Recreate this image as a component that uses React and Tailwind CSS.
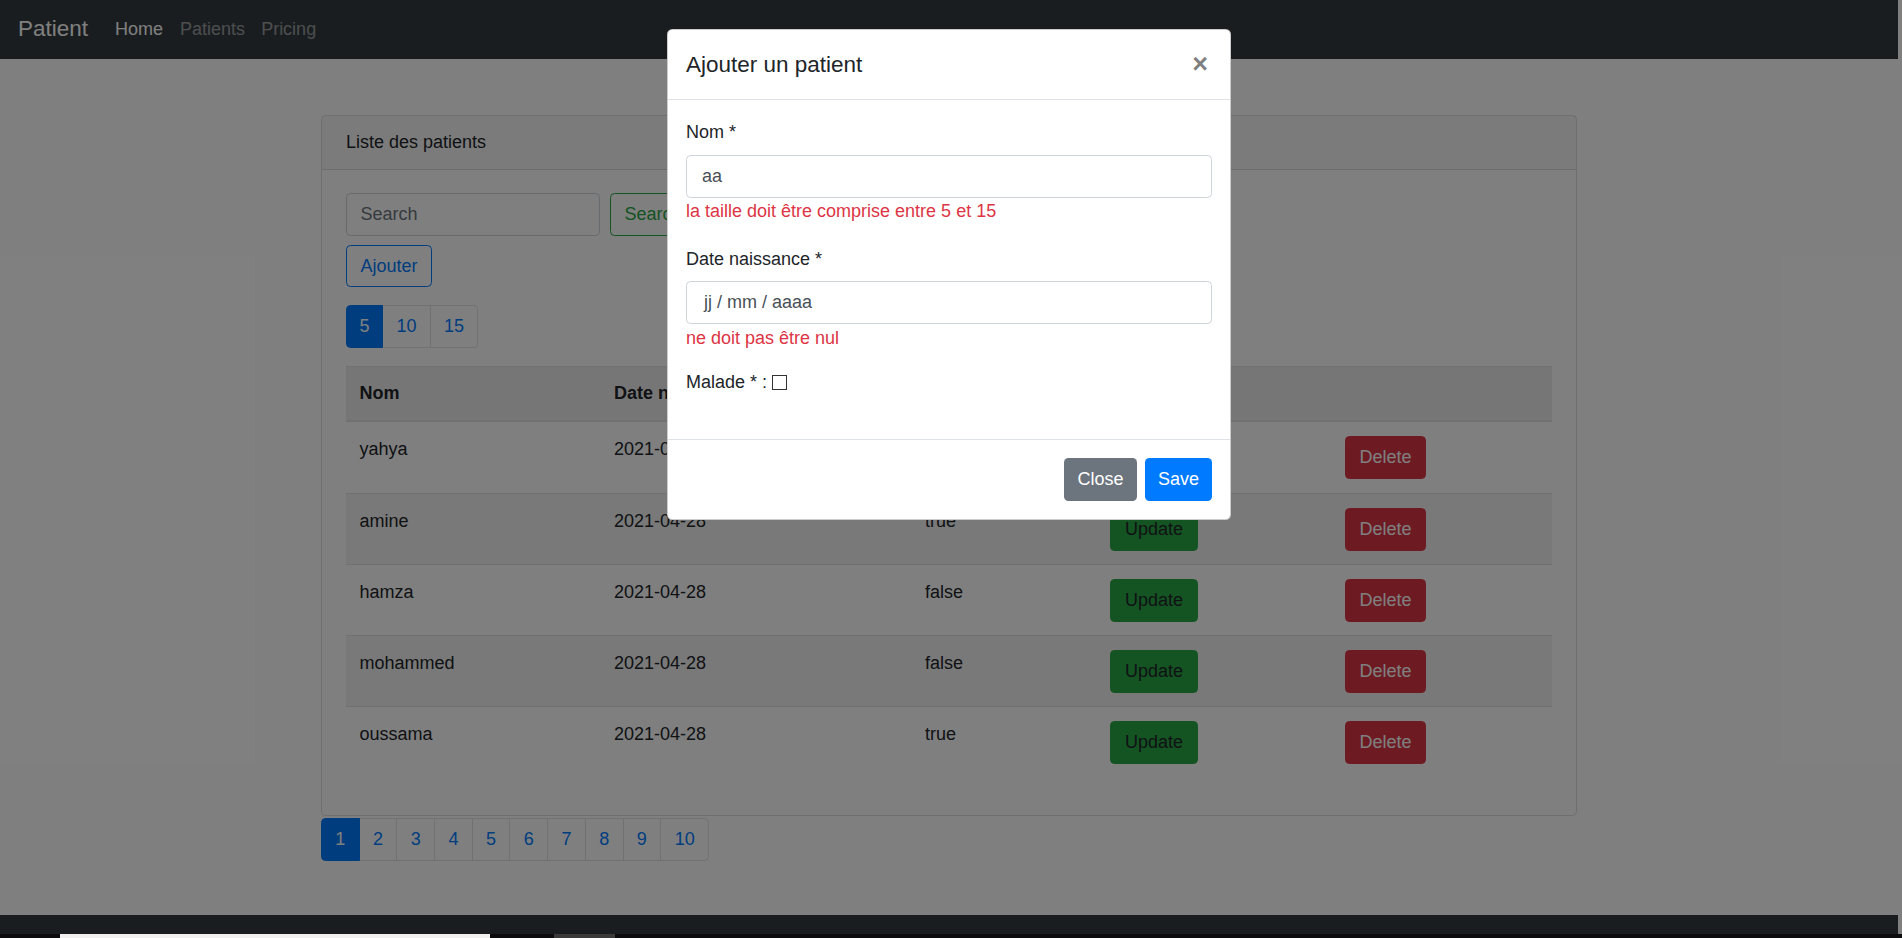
import React from 'react';

const patients = [
  { nom: 'yahya', date: '2021-04-28', malade: 'false' },
  { nom: 'amine', date: '2021-04-28', malade: 'true' },
  { nom: 'hamza', date: '2021-04-28', malade: 'false' },
  { nom: 'mohammed', date: '2021-04-28', malade: 'false' },
  { nom: 'oussama', date: '2021-04-28', malade: 'true' },
];

const pages = ['1', '2', '3', '4', '5', '6', '7', '8', '9', '10'];

function Navbar() {
  return (
    <nav className="flex h-[59px] shrink-0 items-center bg-[#343a40] px-[18px]">
      <span className="mr-[18px] text-[22.5px] leading-none text-white">Patient</span>
      <a className="px-[9px] text-white">Home</a>
      <a className="px-[8px] text-white/50">Patients</a>
      <a className="px-[8px] text-white/50">Pricing</a>
    </nav>
  );
}

function PatientTable() {
  const cols = 'grid grid-cols-[254.5px_311px_185px_235px_1fr]';
  return (
    <div className="mt-[18px] w-full">
      {/* entête */}
      <div className={`${cols} h-[56px] border-t border-b-2 border-[#dee2e6] bg-[#ededed] font-bold`}>
        <div className="px-[13.5px] pt-[13px] leading-[27px]">Nom</div>
        <div className="px-[13.5px] pt-[13px] leading-[27px]">Date naissance</div>
        <div className="px-[13.5px] pt-[13px] leading-[27px]">Malade</div>
        <div />
        <div />
      </div>
      {patients.map((p, i) => (
        <div
          key={p.nom}
          className={`${cols} h-[71px] ${i > 0 ? 'border-t border-[#dee2e6]' : ''} ${i % 2 === 1 ? 'bg-[#f2f2f2]' : 'bg-white'}`}
        >
          <div className="px-[13.5px] pt-[13.5px] leading-[27px]">{p.nom}</div>
          <div className="px-[13.5px] pt-[13.5px] leading-[27px]">{p.date}</div>
          <div className="px-[13.5px] pt-[13.5px] leading-[27px]">{p.malade}</div>
          <div className="px-[13.5px] pt-[13.5px]">
            <button className="h-[43px] w-[88px] rounded-[4.5px] border border-[#28a745] bg-[#28a745] text-[#212529]">
              Update
            </button>
          </div>
          <div className="px-[13.5px] pt-[13.5px]">
            <button className="h-[43px] w-[81px] rounded-[4.5px] border border-[#dc3545] bg-[#dc3545] text-white">
              Delete
            </button>
          </div>
        </div>
      ))}
    </div>
  );
}

function PatientCard() {
  return (
    <div className="rounded-[4.5px] border border-black/[0.125]">
      <div className="flex h-[54px] items-center border-b border-black/[0.125] bg-black/[0.03] px-[24px]">
        Liste des patients
      </div>
      <div className="px-[24px] pt-[23px] pb-[38px]">
        <div className="flex">
          <div className="flex h-[43px] w-[254px] items-center rounded-[4.5px] border border-[#ced4da] px-[13.5px] text-[#6c757d]">
            Search
          </div>
          <button className="ml-[10px] h-[43px] rounded-[4.5px] border border-[#28a745] px-[13.5px] text-[#28a745]">
            Search
          </button>
        </div>
        <button className="mt-[9px] h-[42px] w-[86px] rounded-[4.5px] border border-[#007bff] text-[#007bff]">
          Ajouter
        </button>
        <div className="mt-[18px] flex h-[43px]">
          <div className="flex w-[37px] items-center justify-center rounded-l-[4.5px] border border-[#007bff] bg-[#007bff] text-white">5</div>
          <div className="flex w-[48px] items-center justify-center border border-l-0 border-[#dee2e6] text-[#007bff]">10</div>
          <div className="flex w-[47px] items-center justify-center rounded-r-[4.5px] border border-l-0 border-[#dee2e6] text-[#007bff]">15</div>
        </div>
        <PatientTable />
      </div>
    </div>
  );
}

function Pagination() {
  return (
    <div className="mt-[2px] flex h-[43px]">
      {pages.map((n, i) => {
        const active = i === 0;
        const last = i === pages.length - 1;
        return (
          <div
            key={n}
            className={`flex items-center justify-center border ${i > 0 ? '-ml-px' : ''} ${
              last ? 'w-[49px] rounded-r-[4.5px]' : 'w-[38.7px]'
            } ${
              active
                ? 'relative z-10 rounded-l-[4.5px] border-[#007bff] bg-[#007bff] text-white'
                : 'border-[#dee2e6] bg-white text-[#007bff]'
            }`}
          >
            {n}
          </div>
        );
      })}
    </div>
  );
}

function AddPatientModal() {
  return (
    <div className="absolute left-[667px] top-[29px] z-30 w-[564px] rounded-[5.4px] border border-black/20 bg-white text-[#212529]">
      <div className="flex h-[70px] items-center justify-between border-b border-[#dee2e6] px-[18px]">
        <h5 className="text-[22.5px] font-medium">Ajouter un patient</h5>
        <span className="pr-[4px] text-[27px] font-bold leading-none text-black/50">×</span>
      </div>
      <div className="px-[18px] pt-[19px] pb-[43px]">
        <div className="leading-[27px]">Nom *</div>
        <div className="mt-[9px] flex h-[43px] items-center rounded-[4.5px] border border-[#ced4da] px-[15px] text-[#495057]">
          aa
        </div>
        <div className="leading-[27px] text-[#dc3545]">la taille doit être comprise entre 5 et 15</div>
        <div className="mt-[21px] leading-[27px]">Date naissance *</div>
        <div className="mt-[8px] flex h-[43px] items-center rounded-[4.5px] border border-[#ced4da] pl-[17px] text-[#495057]">
          jj / mm / aaaa
        </div>
        <div className="mt-[1px] leading-[27px] text-[#dc3545]">ne doit pas être nul</div>
        <div className="mt-[17px] flex items-center leading-[27px]">
          Malade * :
          <span className="ml-[5px] inline-block h-[15px] w-[15px] border border-[#333] bg-white" />
        </div>
      </div>
      <div className="flex justify-end gap-[8px] border-t border-[#dee2e6] px-[18px] py-[18px]">
        <button className="h-[43px] w-[73px] rounded-[4.5px] bg-[#6c757d] text-white">Close</button>
        <button className="h-[43px] w-[67px] rounded-[4.5px] bg-[#007bff] text-white">Save</button>
      </div>
    </div>
  );
}

export default function App() {
  return (
    <div className="relative h-[938px] w-full overflow-hidden bg-white font-['Liberation_Sans',Arial,sans-serif] text-[18px] text-[#212529]">
      <div className="flex h-[934px] flex-col pr-[4px]">
        <Navbar />
        <main className="flex-1">
          <div className="mx-auto mt-[56px] w-[1256px]">
            <PatientCard />
            <Pagination />
          </div>
        </main>
        <footer className="h-[19px] shrink-0 bg-[#343a40]" />
      </div>

      {/* fond du modal */}
      <div className="absolute inset-x-0 top-0 z-20 h-[934px] bg-black/50" />
      <AddPatientModal />

      {/* barre des tâches */}
      <div className="relative h-[4px] bg-[#0c0c0e]">
        <div className="absolute left-[60px] top-0 h-[4px] w-[430px] bg-[#f0f0f0]" />
        <div className="absolute left-[554px] top-0 h-[4px] w-[61px] bg-[#3a3a3a]" />
      </div>
    </div>
  );
}
